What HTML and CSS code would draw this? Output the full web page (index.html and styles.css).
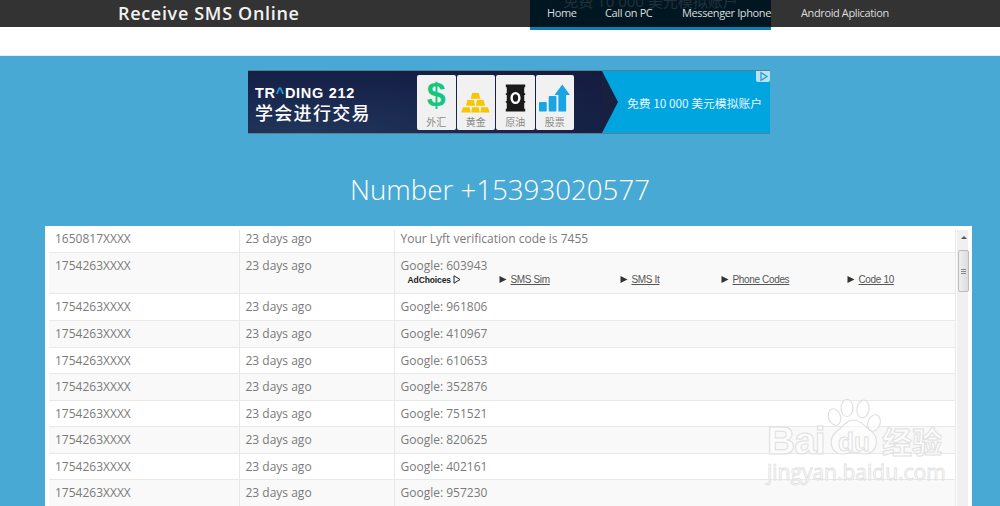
FILE: index.html
```html
<!DOCTYPE html>
<html lang="en">
<head>
<meta charset="utf-8">
<title>Receive SMS Online</title>
<link rel="stylesheet" href="styles.css">
</head>
<body>
<header class="topbar">
  <a class="brand">Receive SMS Online</a>
  <nav class="nav">
    <a class="nav-home">Home</a>
    <a class="nav-call">Call on PC</a>
    <a class="nav-msg">Messenger Iphone</a>
    <a>Android Aplication</a>
  </nav>
  <div class="top-ad"><span>免费 10 000 美元模拟账户</span></div>
</header>
<div class="white-gap"></div>
<main class="main">
  <div class="ad">
    <div class="ad-left">
      <div class="ad-brand">
        <div class="ad-logo">TR<b>^</b>DING 212</div>
        <div class="ad-slogan">学会进行交易</div>
      </div>
      <div class="tiles">
        <div class="tile"><span class="dollar">$</span><small>外汇</small></div>
        <div class="tile">
          <svg class="tile-icon icon-gold" viewBox="0 0 32 22"><g fill="#f7c600"><path d="M12.500 1h7l1.500 6h-10z"/><path d="M7.500 8.500h7l1 6h-9.500z"/><path d="M17.500 8.500h7l1.500 6h-9.500z"/><path d="M3 16h7l1 5.500H1z"/><path d="M12.500 16h7l1 5.500h-9z"/><path d="M22 16h7l2 5.500H21z"/></g></svg>
          <small>黄金</small>
        </div>
        <div class="tile">
          <svg class="tile-icon icon-oil" viewBox="0 0 32 28"><path fill="#1a1a1a" d="M6 0h20v3h-1v6h1v2h-1v6h1v2h-1v6h1v3H6v-3h1v-6H6v-2h1v-6H6V9h1V3H6z"/><ellipse cx="16" cy="14" rx="4" ry="5" fill="none" stroke="#fff" stroke-width="2.500"/></svg>
          <small>原油</small>
        </div>
        <div class="tile">
          <svg class="tile-icon icon-chart" viewBox="0 0 32 28"><g fill="#19a5e2"><rect x="0" y="18" width="8" height="10" rx="1"/><rect x="10" y="12" width="8" height="16" rx="1"/><path d="M20 28V11h-4L24 0l8 11h-4v17z"/></g></svg>
          <small>股票</small>
        </div>
      </div>
    </div>
    <div class="ad-right">
      <span class="ad-offer">免费 10 000 美元模拟账户</span>
      <svg class="ad-tag" viewBox="0 0 14 11"><path fill="#b9e3f5" d="M0 0h14v9a2 2 0 0 1-2 2H2a2 2 0 0 1-2-2z"/><path fill="none" stroke="#1b9bd1" stroke-width="1.200" d="M5 1.500v8l6-4z"/></svg>
    </div>
  </div>
  <h1 class="title">Number +15393020577</h1>
  <section class="panel">
    <div class="scroller">
      <table class="sms">
        <colgroup><col class="c1"><col class="c2"><col></colgroup>
        <tbody>
          <tr><td>1650817XXXX</td><td>23 days ago</td><td>Your Lyft verification code is 7455</td></tr>
          <tr class="ad-row"><td>1754263XXXX</td><td>23 days ago</td><td>Google: 603943
            <div class="adlinks">
              <span class="adchoices">AdChoices <svg viewBox="0 0 8 9"><path fill="none" stroke="#222" d="M1 .8v7.400l6-3.700z"/></svg></span>
              <a><span class="tri"></span>SMS Sim</a><a><span class="tri"></span>SMS It</a><a><span class="tri"></span>Phone Codes</a><a><span class="tri"></span>Code 10</a>
            </div></td></tr>
          <tr class="row-after-ad"><td>1754263XXXX</td><td>23 days ago</td><td>Google: 961806</td></tr>
          <tr><td>1754263XXXX</td><td>23 days ago</td><td>Google: 410967</td></tr>
          <tr><td>1754263XXXX</td><td>23 days ago</td><td>Google: 610653</td></tr>
          <tr><td>1754263XXXX</td><td>23 days ago</td><td>Google: 352876</td></tr>
          <tr><td>1754263XXXX</td><td>23 days ago</td><td>Google: 751521</td></tr>
          <tr><td>1754263XXXX</td><td>23 days ago</td><td>Google: 820625</td></tr>
          <tr><td>1754263XXXX</td><td>23 days ago</td><td>Google: 402161</td></tr>
          <tr><td>1754263XXXX</td><td>23 days ago</td><td>Google: 957230</td></tr>
        </tbody>
      </table>
    </div>
    <div class="scrollbar">
      <span class="arrow"></span>
      <span class="thumb"><i></i></span>
    </div>
  </section>
</main>
<div class="watermark">
  <svg class="paw" viewBox="0 0 54 56"><g fill="#fff" fill-opacity=".55" stroke="#e0e0e0" stroke-width="1.200"><ellipse cx="7.500" cy="18" rx="6" ry="8.500" transform="rotate(-20 7.500 18)"/><ellipse cx="20" cy="9" rx="6" ry="8.500"/><ellipse cx="36" cy="10" rx="6" ry="9" transform="rotate(8 36 10)"/><ellipse cx="47" cy="24" rx="6" ry="8.500" transform="rotate(20 47 24)"/><path d="M27 21c7 0 11 7 17 11 9 6 7 23-7 23-4 0-7-2-10-2s-7 2-11 2C3 55 1 40 9 33c7-5 10-12 18-12z"/></g></svg>
  <div class="wm-main"><span class="wm-bai">Bai</span><span class="wm-du">du</span><span class="wm-cn">经验</span></div>
  <div class="wm-url">jingyan.baidu.com</div>
</div>
</body>
</html>
```
FILE: styles.css
```css
* { box-sizing: border-box; }
html, body { margin: 0; height: 506px; overflow: hidden; }
body { font-family: "Open Sans", sans-serif; background: #fff; position: relative; }

.topbar {
  position: relative;
  height: 27px;
  background: #333;
  display: flex;
  align-items: center;
  padding: 0 0 2px 118px;
  color: #eee;
}
.brand { font-size: 18px; font-weight: 600; color: #f2f2f2; letter-spacing: .68px; width: 429px; white-space: nowrap; }
.nav { position: relative; z-index: 2; display: flex; font-size: 11px; letter-spacing: -.38px; color: #ddd; white-space: nowrap; }
.nav-home { width: 58px; }
.nav-call { width: 77px; }
.nav-msg { width: 119px; }
.top-ad {
  position: absolute;
  left: 530px;
  top: 0;
  width: 241px;
  height: 30px;
  background: #001722;
  border-bottom: 3px solid #0b7fb3;
  overflow: hidden;
  text-align: center;
}
.top-ad span {
  display: block;
  margin-top: -8px;
  font-size: 15px;
  line-height: 18px;
  color: #22313a;
  font-family: "Open Sans", "Noto Sans CJK SC", sans-serif;
}

.white-gap { height: 29px; background: #fff; border-bottom: 1px solid #e4eef3; }
.main { height: 450px; background: #48a9d5; padding-top: 14px; overflow: hidden; }

.ad {
  width: 522px;
  height: 64px;
  margin-left: 248px;
  display: flex;
  border: 1px solid #5d7d92;
  border-width: 1px 0 1px 0;
  font-family: "Noto Sans CJK SC", sans-serif;
}
.ad-left {
  width: 354px;
  display: flex;
  background: radial-gradient(ellipse at 15% 100%, #21365a 0%, #17234a 55%, #141c3e 100%);
}
.ad-brand { width: 169px; padding: 15px 0 0 7px; color: #fff; }
.ad-logo { font-family: "Liberation Sans", sans-serif; font-weight: 700; font-size: 14.500px; line-height: 14px; letter-spacing: .7px; }
.ad-logo b { color: #19a5e2; }
.ad-slogan { font-size: 18px; line-height: 22px; font-weight: 500; letter-spacing: 1.300px; margin-top: 1px; }
.tiles { display: flex; gap: 1px; padding-top: 4px; height: 59px; }
.tile {
  width: 38.500px;
  height: 55px;
  background: #f1f1f1;
  border-radius: 2px;
  display: flex;
  flex-direction: column;
  align-items: center;
  position: relative;
  padding-top: 9px;
}
.tile small { position: absolute; bottom: 1px; left: 0; right: 0; text-align: center; font-size: 10px; line-height: 14px; color: #8a8a8a; }
.tile-icon { display: block; }
.icon-gold { width: 31px; height: 21px; margin-top: 8px; }
.icon-oil { width: 31px; height: 28px; }
.icon-chart { width: 31px; height: 28px; }
.dollar { margin-top: -8px; font-family: "Liberation Sans", sans-serif; font-weight: 700; font-size: 34px; line-height: 36px; color: #14c77e; }

.ad-right {
  flex: 1;
  position: relative;
  background: #00a5e0;
  display: flex;
  align-items: center;
  padding-left: 25px;
}
.ad-right::before {
  content: "";
  position: absolute;
  left: 0;
  top: 0;
  width: 16px;
  height: 100%;
  background: #17213f;
  clip-path: polygon(0 0, 0 100%, 0 100%, 100% 50%, 0 0);
}
.ad-offer { color: #e8f6fc; font-size: 11.800px; white-space: nowrap; }
.ad-tag { position: absolute; right: 0; top: 0; width: 14px; height: 11px; }

.title {
  margin: 37px 0 0;
  height: 55px;
  font-size: 27.700px;
  line-height: 36px;
  font-weight: 300;
  color: #fff;
  text-align: center;
}

.panel {
  width: 927px;
  height: 300px;
  margin-left: 45px;
  background: #fff;
  padding: 4px 4px 0 4px;
  display: flex;
}
.scroller { width: 907px; height: 296px; overflow: hidden; }
.sms {
  width: 907px;
  margin-top: -4px;
  border-collapse: collapse;
  table-layout: fixed;
  font-size: 12px;
  color: #7a7a7a;
}
.c1 { width: 190px; }
.c2 { width: 155px; }
.sms td {
  height: 26px;
  padding: 4px 6px 2px;
  line-height: 18px;
  vertical-align: top;
  border: 1px solid #e8e8e8;
  border-top: 0;
  white-space: nowrap;
}
.sms tr:nth-child(even) { background: #f9f9f9; }
.sms tr:nth-child(even) td { height: 27px; }
.sms tr.row-after-ad td { height: 27px; }
.sms td:first-child { border-left: 0; }
.sms td:last-child { border-right: 1px solid #e8e8e8; }
.sms tr.ad-row td { height: 41px; }

.adlinks {
  display: grid;
  grid-template-columns: 91px 121px 101px 126px auto;
  padding-left: 7px;
  margin-top: -2px;
  height: 14px;
  font-family: "Liberation Sans", sans-serif;
  font-size: 10px;
  letter-spacing: -.35px;
  line-height: 14px;
  align-items: center;
}
.adlinks a { color: #555; text-decoration: underline; }
.tri {
  display: inline-block;
  width: 12px;
  height: 7px;
  vertical-align: -0.500px;
  background: #333;
  clip-path: polygon(1px 0, 8px 50%, 1px 100%);
}
.adchoices { color: #222; font-size: 8.500px; font-weight: 700; letter-spacing: -.1px; }
.adchoices svg { width: 8px; height: 9px; vertical-align: -1px; }

.scrollbar { flex: 1; margin-left: 1px; background: #f0f0f0; position: relative; height: 296px; }
.arrow {
  position: absolute;
  left: 4px;
  top: 6px;
  border: 3px solid transparent;
  border-top: 0;
  border-bottom: 3px solid #555;
}
.thumb {
  position: absolute;
  left: 1px;
  top: 20px;
  width: 11px;
  height: 42px;
  border-radius: 2px;
  border: 1px solid #bbb;
  background: linear-gradient(90deg, #efefef, #dcdcdc);
  display: flex;
  align-items: center;
  justify-content: center;
}
.thumb i { width: 5px; height: 5px; border-top: 1px solid #888; border-bottom: 1px solid #888; background: linear-gradient(#888, #888) center / 100% 1px no-repeat; }

.watermark { position: absolute; left: 766px; top: 398px; width: 180px; height: 90px; pointer-events: none; }
.paw { position: absolute; left: 61px; top: 1px; width: 54px; height: 56px; }
.wm-main { position: absolute; left: 0; top: 21px; width: 180px; height: 40px; font-family: "Liberation Sans", sans-serif; color: rgba(255,255,255,.55); -webkit-text-stroke: 1px #e0e0e0; }
.wm-bai { position: absolute; left: 1px; top: 0; font-size: 39px; line-height: 44px; font-weight: 700; letter-spacing: -1px; }
.wm-du { position: absolute; left: 72px; top: 9px; font-size: 26px; line-height: 28px; font-weight: 700; }
.wm-cn { position: absolute; left: 116px; top: 1px; font-size: 30px; line-height: 40px; font-family: "Noto Sans CJK SC", sans-serif; font-weight: 700; }
.wm-url { position: absolute; left: 1px; top: 60px; font-size: 21px; line-height: 28px; font-family: "Open Sans", sans-serif; color: rgba(255,255,255,.5); -webkit-text-stroke: .8px #e0e0e0; white-space: nowrap; }
```
